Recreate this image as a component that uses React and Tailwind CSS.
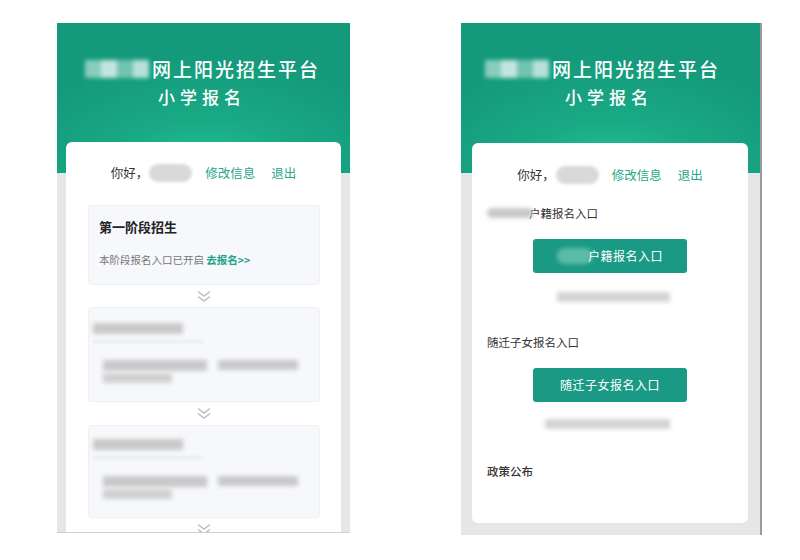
import React from 'react';

const font = { fontFamily: '"Noto Sans CJK SC", "Noto Sans", sans-serif' };

function Mosaic({ className }) {
  return (
    <div className={`flex blur-[2px] ${className}`}>
      <div className="flex-1 bg-white/50" />
      <div className="flex-1 bg-white/75" />
      <div className="flex-1 bg-white/40" />
      <div className="flex-1 bg-white/70" />
    </div>
  );
}

function Header({ padLeft, subLeft }) {
  return (
    <div className="h-[150px] bg-[radial-gradient(ellipse_70%_80%_at_50%_100%,#24c597_0%,#19a985_45%,#14997b_100%)] text-white">
      <div className={`flex items-center pt-[35px] ${padLeft}`}>
        <Mosaic className="w-[64px] h-[18px] mr-[3px]" />
        <span className="text-[19px] leading-[22px] tracking-[2px] font-medium">网上阳光招生平台</span>
      </div>
      <div className={`mt-[7px] text-[17px] leading-[20px] tracking-[5px] font-medium ${subLeft}`}>小学报名</div>
    </div>
  );
}

function Greeting({ className = '' }) {
  return (
    <div className={`flex items-center justify-center h-[20px] text-[12.5px] ${className}`}>
      <span className="text-[#333]">你好，</span>
      <span className="ml-[1px] w-[43px] h-[18px] rounded-full bg-[#d9d9d9] blur-[1.5px]" />
      <span className="ml-[13px] text-[#2aa68a]">修改信息</span>
      <span className="ml-[16px] text-[#2aa68a]">退出</span>
    </div>
  );
}

function Chevrons({ height = 'h-[22px]' }) {
  return (
    <div className={`flex justify-center items-center ${height}`}>
      <svg width="16" height="13" viewBox="0 0 16 13" fill="none" stroke="#bdbdbd" strokeWidth="1.4">
        <path d="M2 1.5l6 4.5 6-4.5" />
        <path d="M2 6.5l6 4.5 6-4.5" />
      </svg>
    </div>
  );
}

function Bar({ className }) {
  return <div className={`bg-[#c9c9c9] blur-[2px] ${className}`} />;
}

function BlurBox({ height, first }) {
  return (
    <div className={`ml-[22px] mr-[21px] ${height} bg-[#f6f8fb] border border-[#eef1f4] rounded-[3px] pl-[4px] ${first}`}>
      <Bar className="w-[90px] h-[11px] bg-[#b9b9b9]" />
      <div className="mt-[6px] w-[110px] h-[3px] bg-[#eaedf0] blur-[1px]" />
      <div className="flex mt-[17px] pl-[10px] gap-[11px]">
        <Bar className="w-[104px] h-[11px]" />
        <Bar className="w-[80px] h-[10px]" />
      </div>
      <Bar className="ml-[10px] mt-[2px] w-[69px] h-[10px] bg-[#d0d0d0]" />
    </div>
  );
}

function LeftPhone() {
  return (
    <div className="w-[293px] h-[510px] bg-[#e6e6e6] overflow-hidden border-b border-[#cfcfcf]">
      <Header padLeft="pl-[28px]" subLeft="pl-[101px]" />
      <div className="mx-[9px] -mt-[31px] h-[420px] bg-white rounded-t-[6px] pt-[21px]">
        <Greeting />
        <div className="mt-[22px] ml-[22px] mr-[21px] h-[80px] bg-[#f6f8fb] border border-[#eef1f4] rounded-[3px] pl-[10px] pt-[12px]">
          <div className="leading-[18px] text-[13px] font-bold text-[#222]">第一阶段招生</div>
          <div className="mt-[17px] leading-[14px] text-[10.5px] text-[#777]">
            本阶段报名入口已开启 <span className="text-[#1fa386] font-bold">去报名&gt;&gt;</span>
          </div>
        </div>
        <Chevrons />
        <BlurBox height="h-[95px]" first="pt-[15px]" />
        <Chevrons height="h-[23px]" />
        <BlurBox height="h-[93px]" first="pt-[13px]" />
        <Chevrons />
      </div>
    </div>
  );
}

function GreenButton({ children }) {
  return (
    <div className="mx-auto w-[154px] h-[34px] rounded-[3px] bg-[#1a9a84] flex items-center justify-center text-white text-[12px] tracking-[0.5px]">
      {children}
    </div>
  );
}

function RightPhone() {
  return (
    <div className="w-[301px] h-[512px] bg-[#e6e6e6] overflow-hidden border-r-2 border-[#9a9a9a]">
      <Header padLeft="pl-[24px]" subLeft="pl-[104px]" />
      <div className="ml-[11px] mr-[12px] -mt-[30px] h-[380px] bg-white rounded-[6px] pl-[15px] pt-[22px]">
        <Greeting className="pr-[15px]" />
        <div className="mt-[20px] flex items-center leading-[16px] text-[11.5px] text-[#333]">
          <span className="w-[46px] h-[10px] rounded-full bg-[#c8c8c8] blur-[2px] -mr-[4px]" />
          <span>户籍报名入口</span>
        </div>
        <div className="mt-[18px] -ml-[15px]">
          <GreenButton>
            <span className="w-[36px] h-[16px] rounded-full bg-[#5cbba8] blur-[2px] -mr-[5px]" />
            <span className="relative">户籍报名入口</span>
          </GreenButton>
        </div>
        <div className="mt-[19px] ml-[70px] w-[113px] h-[10px] bg-[#d4d4d4] blur-[2px]" />
        <div className="mt-[32px] leading-[16px] text-[11.5px] text-[#333]">随迁子女报名入口</div>
        <div className="mt-[18px] -ml-[15px]">
          <GreenButton>随迁子女报名入口</GreenButton>
        </div>
        <div className="mt-[17px] ml-[58px] w-[125px] h-[10px] bg-[#d4d4d4] blur-[2px]" />
        <div className="mt-[34px] leading-[16px] text-[11.5px] font-medium text-[#333]">政策公布</div>
      </div>
    </div>
  );
}

export default function App() {
  return (
    <div className="w-[800px] h-[560px] bg-white flex items-start pl-[57px] pt-[23px] gap-[111px]" style={font}>
      <LeftPhone />
      <RightPhone />
    </div>
  );
}
